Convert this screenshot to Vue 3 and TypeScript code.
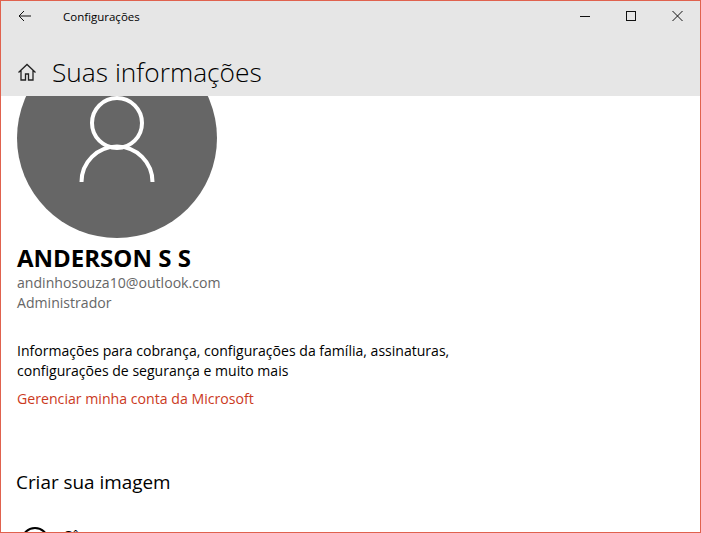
<script setup lang="ts">
const title = "Configurações";
</script>
<template>
  <div class="win">
    <header class="top">
      <div class="bar">
        <svg class="back" width="16" height="16" viewBox="0 0 16 16"><path d="M2 7h12M7 2L2 7l5 5" fill="none" stroke="#111" stroke-width="1"/></svg>
        <span class="title">{{ title }}</span>
        <div class="ctrls">
          <svg width="46" height="30" viewBox="0 0 46 30"><path d="M18 15.500h10" stroke="#111"/></svg>
          <svg width="46" height="30" viewBox="0 0 46 30"><rect x="18.500" y="10.500" width="9" height="9" fill="none" stroke="#111"/></svg>
          <svg width="46" height="30" viewBox="0 0 46 30"><path d="M18.500 10l10 10M28.500 10l-10 10" stroke="#111" fill="none"/></svg>
        </div>
      </div>
      <div class="head">
        <svg width="20" height="20" viewBox="0 0 20 20"><path d="M1.500 10.500L10 2.500l8.500 8M4 8.500V18h4.500v-6h3v6H16V8.500" fill="none" stroke="#222" stroke-width="1.300"/></svg>
        <h1>Suas informações</h1>
      </div>
    </header>
    <main class="body">
      <div class="avatar">
        <svg width="76" height="90" viewBox="0 0 76 90"><circle cx="38" cy="29" r="25" fill="none" stroke="#fff" stroke-width="4"/><path d="M2.500 88a35.500 35.500 0 0 1 71 0" fill="none" stroke="#fff" stroke-width="4"/></svg>
      </div>
      <div class="name">ANDERSON S S</div>
      <div class="sub">andinhosouza10@outlook.com</div>
      <div class="sub">Administrador</div>
      <p class="info">Informações para cobrança, configurações da família, assinaturas, configurações de segurança e muito mais</p>
      <a class="link">Gerenciar minha conta da Microsoft</a>
      <h2>Criar sua imagem</h2>
      <div class="cam">
        <svg width="30" height="30" viewBox="0 0 30 30"><circle cx="15" cy="15" r="13" fill="none" stroke="#000" stroke-width="2"/></svg>
        <span>Câmera</span>
      </div>
    </main>
  </div>
</template>
<style>
html, body { margin: 0; height: 100%; overflow: hidden; }
</style>
<style scoped>
.win { width: 701px; height: 533px; box-sizing: border-box; border: 1px solid #e0624e; background: #fff; overflow: hidden; font-family: "Open Sans", "Noto Sans", sans-serif; color: #000; }
.top { background: #e6e6e6; height: 95px; }
.bar { display: flex; align-items: center; height: 31px; }
.back { margin-left: 16px; }
.title { margin-left: 30px; font-size: 11.500px; }
.ctrls { margin-left: auto; display: flex; align-self: flex-start; }
.head { display: flex; align-items: center; gap: 15px; padding: 24px 0 0 16px; }
h1 { margin: 0; font-weight: 300; font-size: 26.300px; line-height: 32px; }
.body { padding-left: 16px; height: 437px; overflow: hidden; }
.avatar { box-sizing: border-box; width: 200px; height: 200px; margin-top: -58px; padding-top: 56px; border-radius: 50%; background: #666; display: flex; justify-content: center; align-items: flex-start; }
.name { font-size: 24px; font-weight: 700; line-height: 30px; margin-top: 5px; }
.sub { font-size: 14.100px; line-height: 20px; color: #666; }
.info { margin: 28px 0 0; width: 450px; font-size: 14.050px; line-height: 20px; }
.link { display: block; margin-top: 8px; font-size: 14.150px; line-height: 20px; color: #cb3a1e; }
h2 { margin: 59px 0 0; margin-left: -1px; font-weight: 400; font-size: 18.900px; line-height: 28px; }
.cam { display: flex; gap: 13px; align-items: flex-start; margin-top: 30px; margin-left: 3px; font-size: 14px; line-height: 20px; }
</style>
